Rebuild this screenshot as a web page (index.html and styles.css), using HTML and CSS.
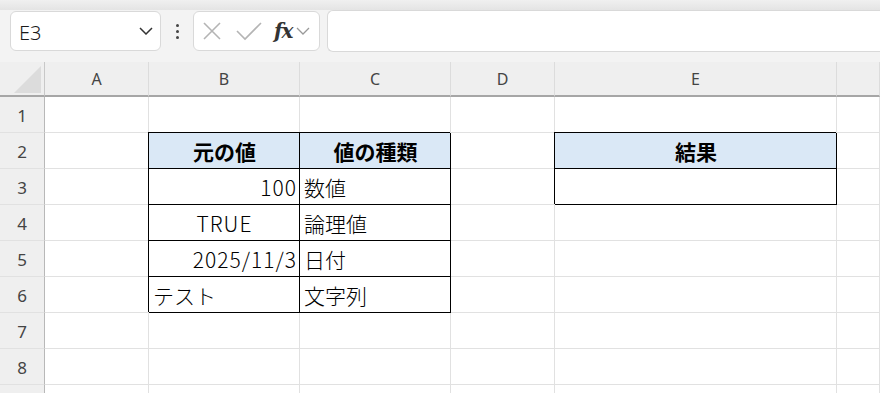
FILE: index.html
```html
<!DOCTYPE html>
<html lang="ja">
<head>
  <meta charset="UTF-8" />
  <title>Sheet</title>
<link rel="stylesheet" href="styles.css">
</head>
<body>
  <div class="ribbon-edge"></div>

  <div class="formula-bar">
    <div class="name-box">
      <span>E3</span>
      <svg class="chev" width="14" height="8" viewBox="0 0 14 8"><path d="M1 1l6 6 6-6" fill="none" stroke="#333" stroke-width="1.5"/></svg>
    </div>
    <div class="more-dots"><i></i><i></i><i></i></div>
    <div class="fx-box">
      <svg width="20" height="20" viewBox="0 0 20 20"><path d="M2 2l16 16M18 2L2 18" stroke="#b4b4b4" stroke-width="1.6"/></svg>
      <svg width="26" height="20" viewBox="0 0 26 20"><path d="M1 10l8 8L25 2" fill="none" stroke="#b4b4b4" stroke-width="1.6"/></svg>
      <span class="fx">fx</span>
      <svg width="14" height="8" viewBox="0 0 14 8"><path d="M1 1l6 6 6-6" fill="none" stroke="#999" stroke-width="1.3"/></svg>
    </div>
    <div class="formula-input"></div>
  </div>

  <div class="sheet">
    <div class="corner"><div class="corner-tri"></div></div>
    <div class="col-head">A</div>
    <div class="col-head">B</div>
    <div class="col-head">C</div>
    <div class="col-head">D</div>
    <div class="col-head">E</div>
    <div class="col-head"></div>

    <div class="row-head">1</div>
    <div class="cell"></div><div class="cell"></div><div class="cell"></div><div class="cell"></div><div class="cell"></div><div class="cell"></div>

    <div class="row-head">2</div>
    <div class="cell"></div>
    <div class="cell boxed th">元の値</div>
    <div class="cell boxed th">値の種類</div>
    <div class="cell"></div>
    <div class="cell boxed th">結果</div>
    <div class="cell"></div>

    <div class="row-head">3</div>
    <div class="cell"></div>
    <div class="cell boxed right">100</div>
    <div class="cell boxed">数値</div>
    <div class="cell"></div>
    <div class="cell boxed"></div>
    <div class="cell"></div>

    <div class="row-head">4</div>
    <div class="cell"></div>
    <div class="cell boxed center">TRUE</div>
    <div class="cell boxed">論理値</div>
    <div class="cell"></div><div class="cell"></div><div class="cell"></div>

    <div class="row-head">5</div>
    <div class="cell"></div>
    <div class="cell boxed right">2025/11/3</div>
    <div class="cell boxed">日付</div>
    <div class="cell"></div><div class="cell"></div><div class="cell"></div>

    <div class="row-head">6</div>
    <div class="cell"></div>
    <div class="cell boxed">テスト</div>
    <div class="cell boxed">文字列</div>
    <div class="cell"></div><div class="cell"></div><div class="cell"></div>

    <div class="row-head">7</div>
    <div class="cell"></div><div class="cell"></div><div class="cell"></div><div class="cell"></div><div class="cell"></div><div class="cell"></div>

    <div class="row-head">8</div>
    <div class="cell"></div><div class="cell"></div><div class="cell"></div><div class="cell"></div><div class="cell"></div><div class="cell"></div>

    <div class="row-head"></div>
    <div class="cell"></div><div class="cell"></div><div class="cell"></div><div class="cell"></div><div class="cell"></div><div class="cell"></div>
  </div>
</body>
</html>
```

FILE: styles.css
```css
:root {
  --toolbar: #f3f3f3;
  --head-bg: #efefef;
  --grid: #e1e1e1;
  --head-line: #a6a6a6;
  --th-bg: #dae8f6;
  --text: #000;
}

body {
  margin: 0;
  background: var(--toolbar);
  font-family: "Noto Sans", "Noto Sans CJK JP", sans-serif;
  overflow: hidden;
}

.ribbon-edge {
  height: 10px;
  background: linear-gradient(#f0f0f0, #e4e4e4);
}

.formula-bar {
  display: flex;
  align-items: center;
  height: 42px;
  padding: 0 0 0 10px;
  margin-bottom: 10px;
}

.name-box {
  width: 151px;
  height: 40px;
  box-sizing: border-box;
  background: #fff;
  border: 1px solid #d9d9d9;
  border-radius: 6px;
  display: flex;
  align-items: center;
  justify-content: space-between;
  padding: 0 7px 0 8px;
  font-size: 20px;
  font-weight: 300;
  color: #1a1a1a;
}

.name-box span {
  padding-top: 2px;
}

.more-dots {
  width: 32px;
  display: flex;
  flex-direction: column;
  align-items: center;
  gap: 3px;
}

.more-dots i {
  width: 3px;
  height: 3px;
  border-radius: 50%;
  background: #444;
}

.fx-box {
  width: 127px;
  height: 40px;
  box-sizing: border-box;
  background: #fff;
  border: 1px solid #d9d9d9;
  border-radius: 6px;
  display: flex;
  align-items: center;
  padding: 0 4px 0 8px;
}

.fx-box svg:first-child {
  margin-right: 14px;
}

.fx {
  font-family: "DejaVu Serif", "Liberation Serif", serif;
  font-style: italic;
  font-weight: bold;
  font-size: 20px;
  color: #333;
  margin: 0 3px 0 12px;
  letter-spacing: -1px;
}

.formula-input {
  flex: 1;
  height: 40px;
  margin-left: 7px;
  background: #fff;
  border: 1px solid #d9d9d9;
  border-right: none;
  border-radius: 6px 0 0 6px;
}

.sheet {
  display: grid;
  grid-template-columns: 45px 104px 151px 151px 104px 282px 1fr;
  grid-template-rows: 35px repeat(9, 36px);
  background: #fff;
}

.corner,
.col-head {
  background: var(--head-bg);
  border-bottom: 2px solid var(--head-line);
}

.corner {
  border-right: 1px solid #c8c8c8;
  position: relative;
}

.corner-tri {
  position: absolute;
  right: 3px;
  bottom: 2px;
  width: 0;
  height: 0;
  border-left: 27px solid transparent;
  border-bottom: 27px solid #dcdcdc;
}

.col-head {
  border-right: 1px solid #dcdcdc;
  display: flex;
  align-items: center;
  justify-content: center;
  font-size: 16px;
  color: #444;
  padding-top: 1px;
}

.row-head {
  background: var(--head-bg);
  border-right: 1px solid #b8b8b8;
  border-bottom: 1px solid var(--grid);
  display: flex;
  align-items: center;
  justify-content: center;
  font-size: 17px;
  color: #444;
  padding-top: 2px;
}

.cell {
  border-right: 1px solid var(--grid);
  border-bottom: 1px solid var(--grid);
  display: flex;
  align-items: center;
  padding: 1px 3px 0 4px;
  font-family: "Noto Sans CJK JP", "Noto Sans", sans-serif;
  font-size: 21px;
  font-weight: 300;
  color: var(--text);
  white-space: nowrap;
  overflow: hidden;
}

.cell.boxed {
  border-color: #000;
  box-shadow: -1px -1px 0 #000;
  overflow: visible;
}

.cell.th {
  background: var(--th-bg);
  font-weight: bold;
  justify-content: center;
}

.cell.right {
  justify-content: flex-end;
  letter-spacing: 1px;
  padding-right: 2px;
}

.cell.center {
  justify-content: center;
  letter-spacing: 1px;
}
```
